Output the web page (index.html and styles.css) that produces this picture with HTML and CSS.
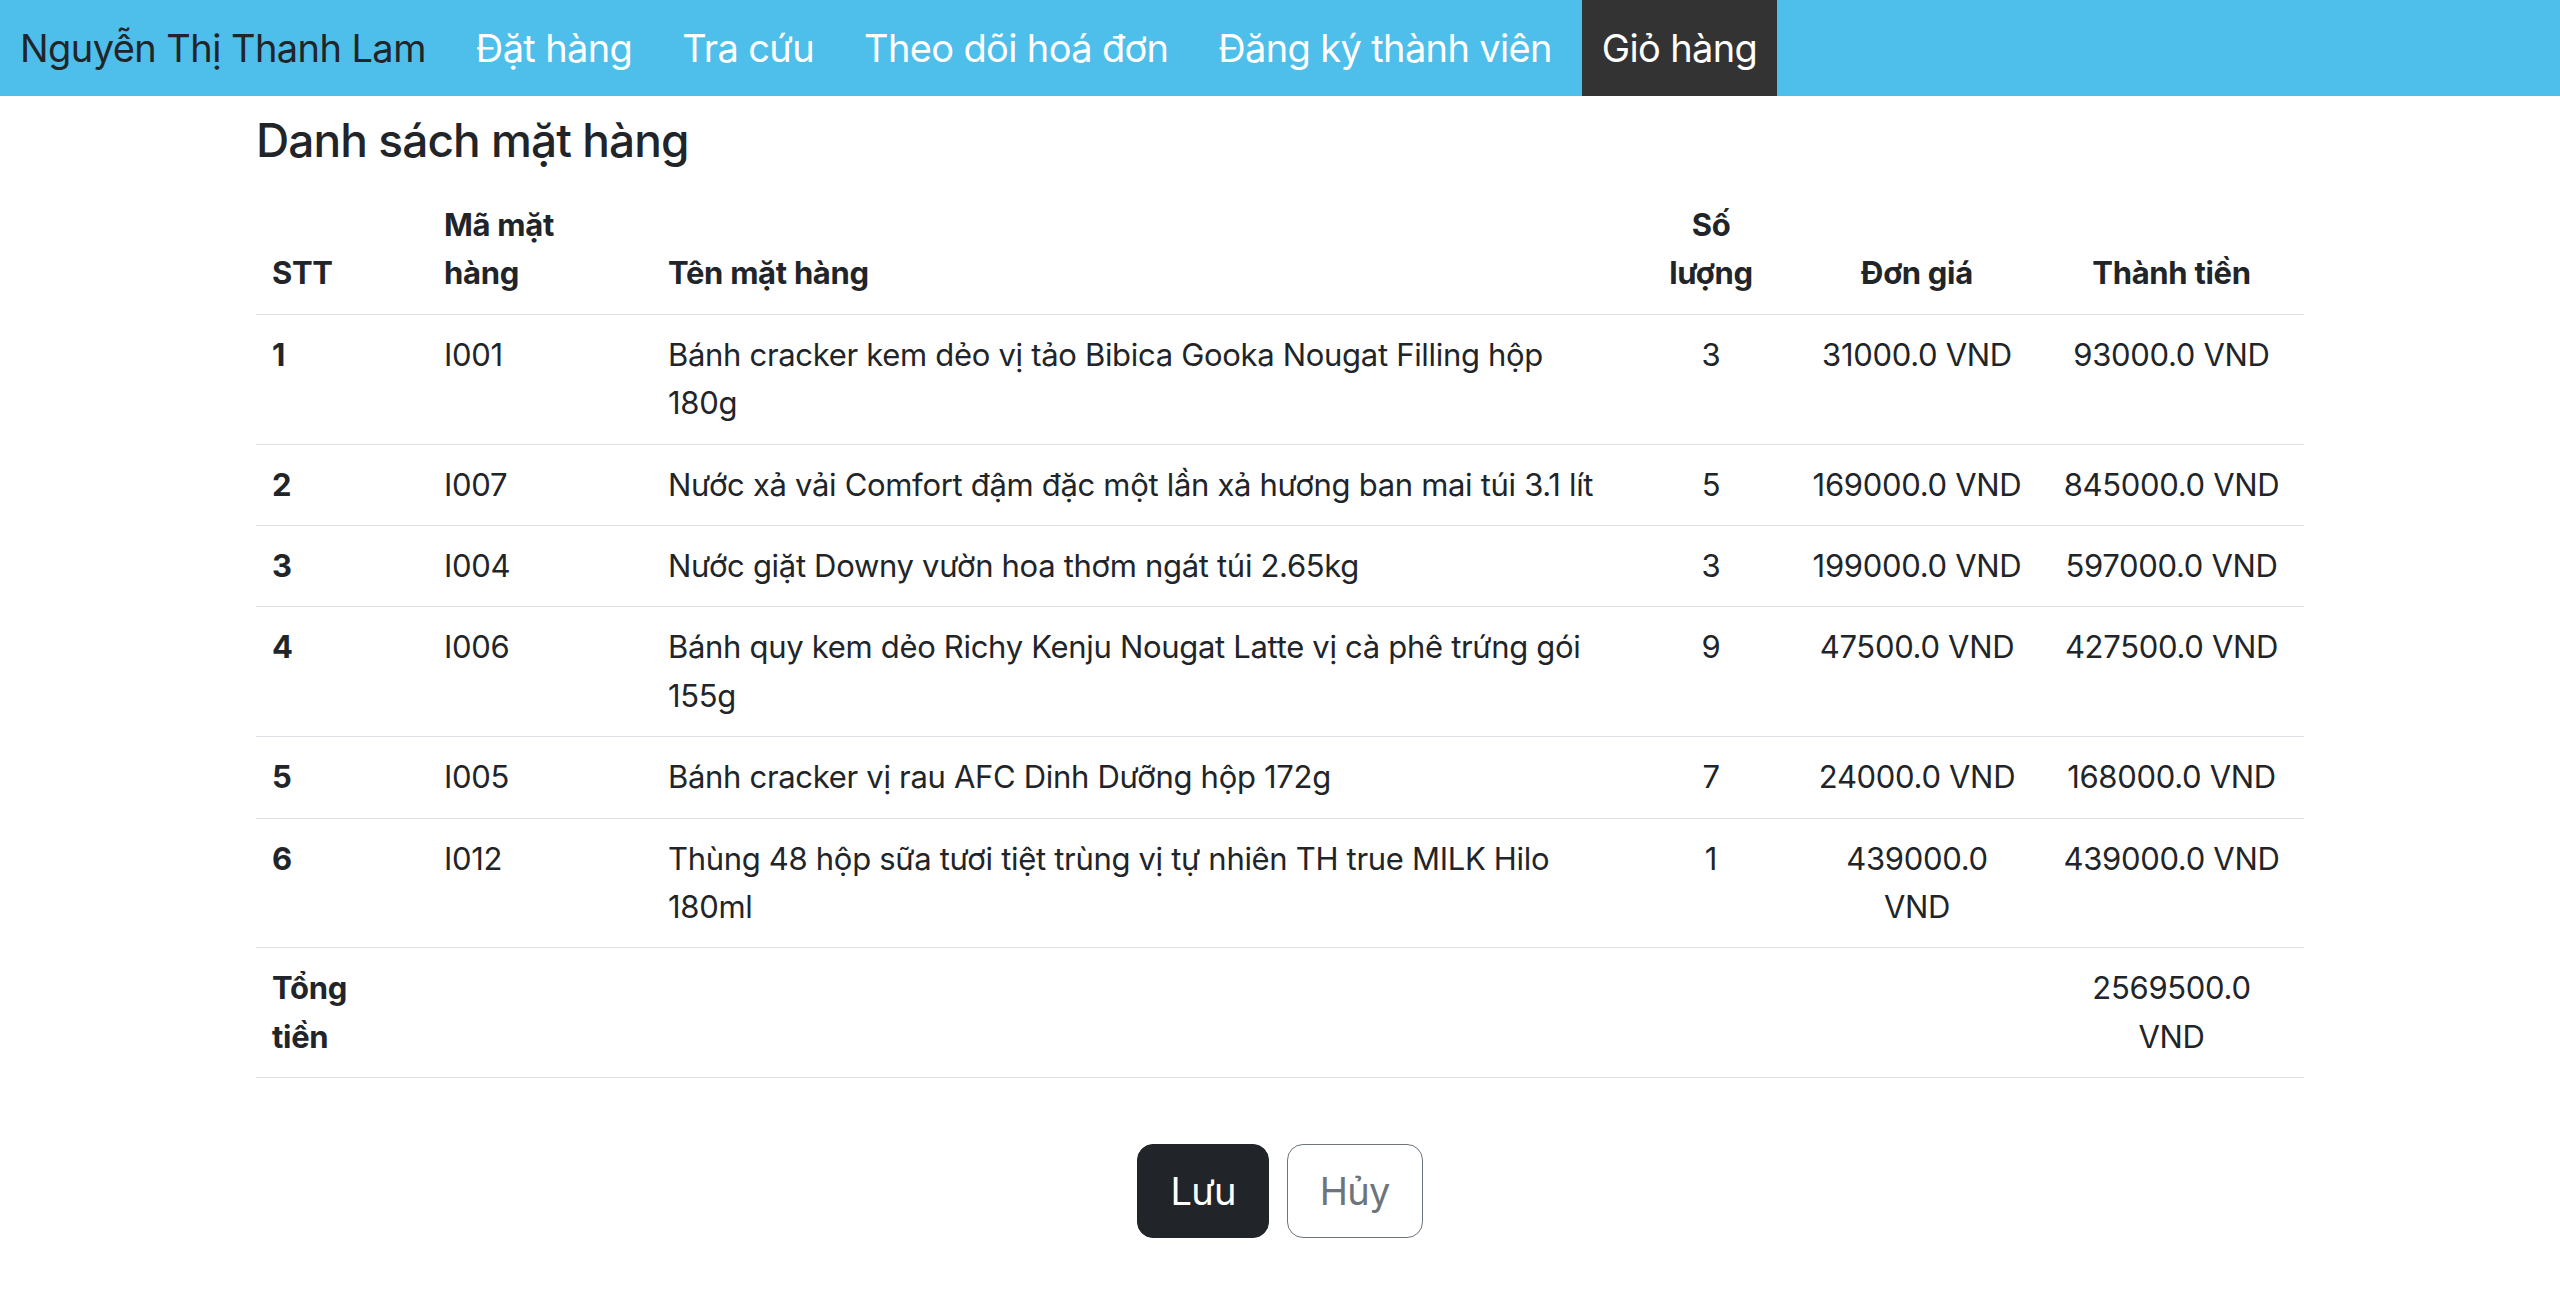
FILE: index.html
```html
<!DOCTYPE html>
<html lang="vi">
<head>
<meta charset="utf-8">
<title>Giỏ hàng</title>
<link rel="stylesheet" href="styles.css">
</head>
<body>
<nav class="navbar">
  <a class="brand" href="#">Nguyễn Thị Thanh Lam</a>
  <ul class="nav">
    <li><a href="#">Đặt hàng</a></li>
    <li><a href="#">Tra cứu</a></li>
    <li><a href="#">Theo dõi hoá đơn</a></li>
    <li><a href="#">Đăng ký thành viên</a></li>
    <li><a class="active" href="#">Giỏ hàng</a></li>
  </ul>
</nav>
<main class="content">
  <h4 class="title">Danh sách mặt hàng</h4>
  <table class="cart">
    <colgroup>
      <col class="c-stt"><col class="c-ma"><col class="c-ten"><col class="c-sl"><col class="c-dg"><col class="c-tt">
    </colgroup>
    <thead>
      <tr>
        <th>STT</th>
        <th>Mã mặt<br>hàng</th>
        <th>Tên mặt hàng</th>
        <th class="center">Số<br>lượng</th>
        <th class="center">Đơn giá</th>
        <th class="center">Thành tiền</th>
      </tr>
    </thead>
    <tbody>
      <tr><th>1</th><td>I001</td><td>Bánh cracker kem dẻo vị tảo Bibica Gooka Nougat Filling hộp 180g</td><td class="center">3</td><td class="center">31000.0 VND</td><td class="center">93000.0 VND</td></tr>
      <tr><th>2</th><td>I007</td><td>Nước xả vải Comfort đậm đặc một lần xả hương ban mai túi 3.1 lít</td><td class="center">5</td><td class="center">169000.0 VND</td><td class="center">845000.0 VND</td></tr>
      <tr><th>3</th><td>I004</td><td>Nước giặt Downy vườn hoa thơm ngát túi 2.65kg</td><td class="center">3</td><td class="center">199000.0 VND</td><td class="center">597000.0 VND</td></tr>
      <tr><th>4</th><td>I006</td><td>Bánh quy kem dẻo Richy Kenju Nougat Latte vị cà phê trứng gói 155g</td><td class="center">9</td><td class="center">47500.0 VND</td><td class="center">427500.0 VND</td></tr>
      <tr><th>5</th><td>I005</td><td>Bánh cracker vị rau AFC Dinh Dưỡng hộp 172g</td><td class="center">7</td><td class="center">24000.0 VND</td><td class="center">168000.0 VND</td></tr>
      <tr><th>6</th><td>I012</td><td>Thùng 48 hộp sữa tươi tiệt trùng vị tự nhiên TH true MILK Hilo 180ml</td><td class="center">1</td><td class="center">439000.0<br>VND</td><td class="center">439000.0 VND</td></tr>
    </tbody>
    <tfoot>
      <tr><th>Tổng<br>tiền</th><td></td><td></td><td></td><td></td><td class="center">2569500.0<br>VND</td></tr>
    </tfoot>
  </table>
  <div class="actions">
    <button class="btn btn-dark" type="button">Lưu</button>
    <button class="btn btn-outline" type="button">Hủy</button>
  </div>
</main>
</body>
</html>
```

FILE: styles.css
```css
* { box-sizing: border-box; }

body {
  margin: 0;
  font-family: Inter, "Liberation Sans", Arial, sans-serif;
  color: #212529;
  background: #fff;
}

.navbar {
  display: flex;
  align-items: stretch;
  height: 96px;
  background: #4ebeea;
}

.brand {
  display: flex;
  align-items: center;
  padding: 0 20px;
  font-size: 38px;
  letter-spacing: -0.015em;
  color: #212529;
  text-decoration: none;
}

.nav {
  display: flex;
  list-style: none;
  margin: 0 0 0 10px;
  padding: 0;
  gap: 10px;
}

.nav li { display: flex; }

.nav a {
  display: flex;
  align-items: center;
  padding: 0 20px;
  font-size: 38px;
  letter-spacing: -0.017em;
  color: #fff;
  text-decoration: none;
}

.nav a.active { background: #333; }

.content {
  width: 2048px;
  margin: 0 auto;
}

.title {
  margin: 16px 0;
  font-size: 46px;
  font-weight: 500;
  letter-spacing: -0.02em;
  line-height: 57px;
}

.cart {
  width: 100%;
  border-collapse: collapse;
  table-layout: fixed;
  font-size: 31px;
  letter-spacing: -0.01em;
  line-height: 48.4px;
}

.c-stt { width: 172px; }
.c-ma { width: 224px; }
.c-ten { width: 975px; }
.c-sl { width: 168px; }
.c-dg { width: 244px; }
.c-tt { width: 265px; }

.cart th,
.cart td {
  padding: 16px;
  text-align: left;
  vertical-align: top;
  border-bottom: 1px solid #dee2e6;
}

.cart th { font-weight: 700; }

.cart thead th { vertical-align: bottom; }

.cart .center {
  text-align: center;
  white-space: nowrap;
}

.actions {
  display: flex;
  justify-content: center;
  gap: 18px;
  margin-top: 66px;
}

.btn {
  font-family: inherit;
  font-size: 38px;
  letter-spacing: -0.02em;
  line-height: 60px;
  padding: 16px 32px;
  border-radius: 16px;
  border: 1px solid transparent;
  cursor: pointer;
}

.btn-dark {
  background: #212529;
  border-color: #212529;
  color: #fff;
}

.btn-outline {
  background: #fff;
  border-color: #6c757d;
  color: #6c757d;
}
```
